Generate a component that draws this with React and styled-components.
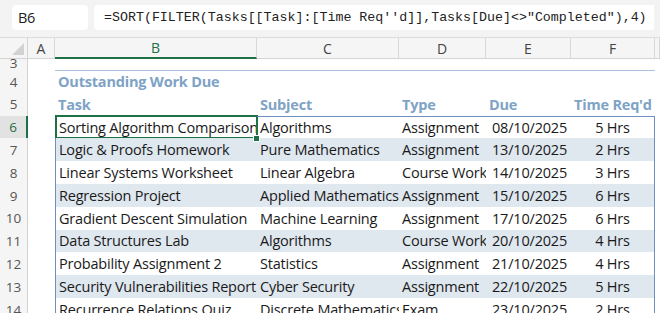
import React from 'react';
import styled, { createGlobalStyle } from 'styled-components';

const GlobalStyle = createGlobalStyle`
  html, body {
    margin: 0;
    padding: 0;
    background: #ffffff;
    overflow: hidden;
  }
  body {
    width: 660px;
    height: 313px;
  }
`;

const COLS = '28px 27px 202px 142px 87px 85px 84px 5px';
const ROW_H = '22.8px';
const GREEN = '#1e7145';
const HEAD_BLUE = '#7ea3c6';
const TABLE_BORDER = '#6f8fbf';
const STRIPE = '#dfe7ef';
const CELL_FONT = `'Open Sans', 'Noto Sans', sans-serif`;

const Page = styled.div`
  width: 660px;
  height: 313px;
  overflow: hidden;
  display: flex;
  flex-direction: column;
  font-family: ${CELL_FONT};

  & > * {
    flex-shrink: 0;
  }
`;

const FormulaBar = styled.div`
  display: flex;
  gap: 6px;
  height: 38px;
  box-sizing: border-box;
  padding: 5px 6px 7px 12px;
  background: #f3f3f3;
  border-bottom: 1px solid #dcdcdc;
`;

const NameBox = styled.div`
  width: 76px;
  display: flex;
  align-items: center;
  padding-left: 6px;
  box-sizing: border-box;
  background: #ffffff;
  border-radius: 4px;
  font-size: 14.5px;
  color: #222;
  letter-spacing: -0.3px;
`;

const FormulaBox = styled.div`
  flex: 1;
  display: flex;
  align-items: center;
  padding-left: 10px;
  background: #ffffff;
  border-radius: 4px 0 0 4px;
  font-family: 'Liberation Mono', 'DejaVu Sans Mono', monospace;
  font-size: 13.3px;
  color: #222;
  white-space: nowrap;
  overflow: hidden;
`;

const Grid = styled.div`
  display: flex;
  flex-direction: column;

  & > * {
    flex-shrink: 0;
  }
`;

const Row = styled.div`
  display: grid;
  grid-template-columns: ${COLS};
  height: ${({ $h }) => $h || ROW_H};
  overflow: ${({ $clip }) => ($clip ? 'hidden' : 'visible')};
  align-items: stretch;
`;

const Corner = styled.div`
  position: relative;
  background: #f5f5f5;
  border-right: 1px solid #d4d4d4;
  border-bottom: 1px solid #d4d4d4;

  &::after {
    content: '';
    position: absolute;
    right: 3px;
    bottom: 3px;
    border-style: solid;
    border-width: 0 0 12px 12px;
    border-color: transparent transparent #d2d2d2 transparent;
  }
`;

const ColHead = styled.div`
  display: flex;
  align-items: center;
  justify-content: center;
  background: #f5f5f5;
  border-right: 1px solid #d8d8d8;
  border-bottom: ${({ $active }) => ($active ? `2px solid ${GREEN}` : '1px solid #d4d4d4')};
  color: ${({ $active }) => ($active ? GREEN : '#444')};
  font-size: 14px;
  box-sizing: border-box;
`;

const RowHead = styled.div`
  display: flex;
  align-items: ${({ $top }) => ($top ? 'flex-start' : 'center')};
  justify-content: center;
  background: ${({ $active }) => ($active ? '#e2e2e2' : '#f5f5f5')};
  border-right: ${({ $active }) => ($active ? `2px solid ${GREEN}` : '1px solid #d4d4d4')};
  color: ${({ $active }) => ($active ? GREEN : '#555')};
  font-size: 13.5px;
  line-height: 1;
  padding-top: ${({ $top }) => ($top ? '0' : '2px')};
  box-sizing: border-box;
`;

const Cell = styled.div`
  position: relative;
  display: flex;
  align-items: center;
  justify-content: ${({ $align }) =>
    $align === 'center' ? 'center' : $align === 'right' ? 'flex-end' : 'flex-start'};
  padding: 0 ${({ $align }) => ($align === 'right' ? '4px' : '0')} 0
    ${({ $align }) => ($align === 'left' || !$align ? '3px' : '0')};
  box-sizing: border-box;
  white-space: nowrap;
  overflow: ${({ $spill }) => ($spill ? 'visible' : 'hidden')};
  font-size: 14.5px;
  letter-spacing: -0.2px;
  color: ${({ $color }) => $color || '#1a1a1a'};
  font-weight: ${({ $bold }) => ($bold ? 700 : 400)};
  background: ${({ $stripe }) => ($stripe ? STRIPE : 'transparent')};
  border-top: ${({ $top }) => $top || 'none'};
  border-left: ${({ $left }) => ($left ? `1px solid ${TABLE_BORDER}` : 'none')};
  border-right: ${({ $right }) => ($right ? `1px solid ${TABLE_BORDER}` : 'none')};
`;

const Selected = styled(Cell)`
  overflow: visible;

  &::after {
    content: '';
    position: absolute;
    inset: -2px -1px -1px -1px;
    border: 2px solid ${GREEN};
    pointer-events: none;
  }

  &::before {
    content: '';
    position: absolute;
    right: -3px;
    bottom: -4px;
    width: 5px;
    height: 5px;
    background: ${GREEN};
    border: 1px solid #ffffff;
    z-index: 2;
  }
`;

const SelectedText = styled.span`
  display: block;
  overflow: hidden;
  width: 100%;
`;

const columns = ['A', 'B', 'C', 'D', 'E', 'F', ''];

const headers = ['Task', 'Subject', 'Type', 'Due', "Time Req'd"];

const tasks = [
  ['Sorting Algorithm Comparison', 'Algorithms', 'Assignment', '08/10/2025', '5 Hrs'],
  ['Logic & Proofs Homework', 'Pure Mathematics', 'Assignment', '13/10/2025', '2 Hrs'],
  ['Linear Systems Worksheet', 'Linear Algebra', 'Course Work', '14/10/2025', '3 Hrs'],
  ['Regression Project', 'Applied Mathematics', 'Assignment', '15/10/2025', '6 Hrs'],
  ['Gradient Descent Simulation', 'Machine Learning', 'Assignment', '17/10/2025', '6 Hrs'],
  ['Data Structures Lab', 'Algorithms', 'Course Work', '20/10/2025', '4 Hrs'],
  ['Probability Assignment 2', 'Statistics', 'Assignment', '21/10/2025', '4 Hrs'],
  ['Security Vulnerabilities Report', 'Cyber Security', 'Assignment', '22/10/2025', '5 Hrs'],
  ['Recurrence Relations Quiz', 'Discrete Mathematics', 'Exam', '23/10/2025', '2 Hrs'],
];

const TITLE_LINE = '1px solid #a9c2dc';

const App = () => {
  return (
    <>
      <GlobalStyle />
      <Page>
        <FormulaBar>
          <NameBox>B6</NameBox>
          <FormulaBox>
            =SORT(FILTER(Tasks[[Task]:[Time Req''d]],Tasks[Due]&lt;&gt;"Completed"),4)
          </FormulaBox>
        </FormulaBar>

        <Grid>
          <Row $h="19px">
            <Corner />
            {columns.map((c) => (
              <ColHead key={c || 'G'} $active={c === 'B'}>
                {c}
              </ColHead>
            ))}
          </Row>

          <Row $h="13px" $clip>
            <RowHead $top>3</RowHead>
            <Cell />
            <Cell />
            <Cell />
            <Cell />
            <Cell />
            <Cell />
            <Cell />
          </Row>

          <Row>
            <RowHead>4</RowHead>
            <Cell />
            <Cell $bold $color={HEAD_BLUE} $top={TITLE_LINE} $spill>
              Outstanding Work Due
            </Cell>
            <Cell $top={TITLE_LINE} />
            <Cell $top={TITLE_LINE} />
            <Cell $top={TITLE_LINE} />
            <Cell $top={TITLE_LINE} />
            <Cell />
          </Row>

          <Row>
            <RowHead>5</RowHead>
            <Cell />
            {headers.map((h) => (
              <Cell key={h} $bold $color={HEAD_BLUE}>
                {h}
              </Cell>
            ))}
            <Cell />
          </Row>

          {tasks.map((t, i) => {
            const stripe = i % 2 === 1;
            const top = i === 0 ? `1px solid ${TABLE_BORDER}` : undefined;
            return (
              <Row key={t[0]}>
                <RowHead $active={i === 0}>{6 + i}</RowHead>
                <Cell />
                {i === 0 ? (
                  <Selected $left $top={top}>
                    <SelectedText>{t[0]}</SelectedText>
                  </Selected>
                ) : (
                  <Cell $left $stripe={stripe}>
                    {t[0]}
                  </Cell>
                )}
                <Cell $stripe={stripe} $top={top}>
                  {t[1]}
                </Cell>
                <Cell $stripe={stripe} $top={top}>
                  {t[2]}
                </Cell>
                <Cell $stripe={stripe} $top={top} $align="right">
                  {t[3]}
                </Cell>
                <Cell $stripe={stripe} $top={top} $right $align="center">
                  {t[4]}
                </Cell>
                <Cell />
              </Row>
            );
          })}
        </Grid>
      </Page>
    </>
  );
};

export default App;
